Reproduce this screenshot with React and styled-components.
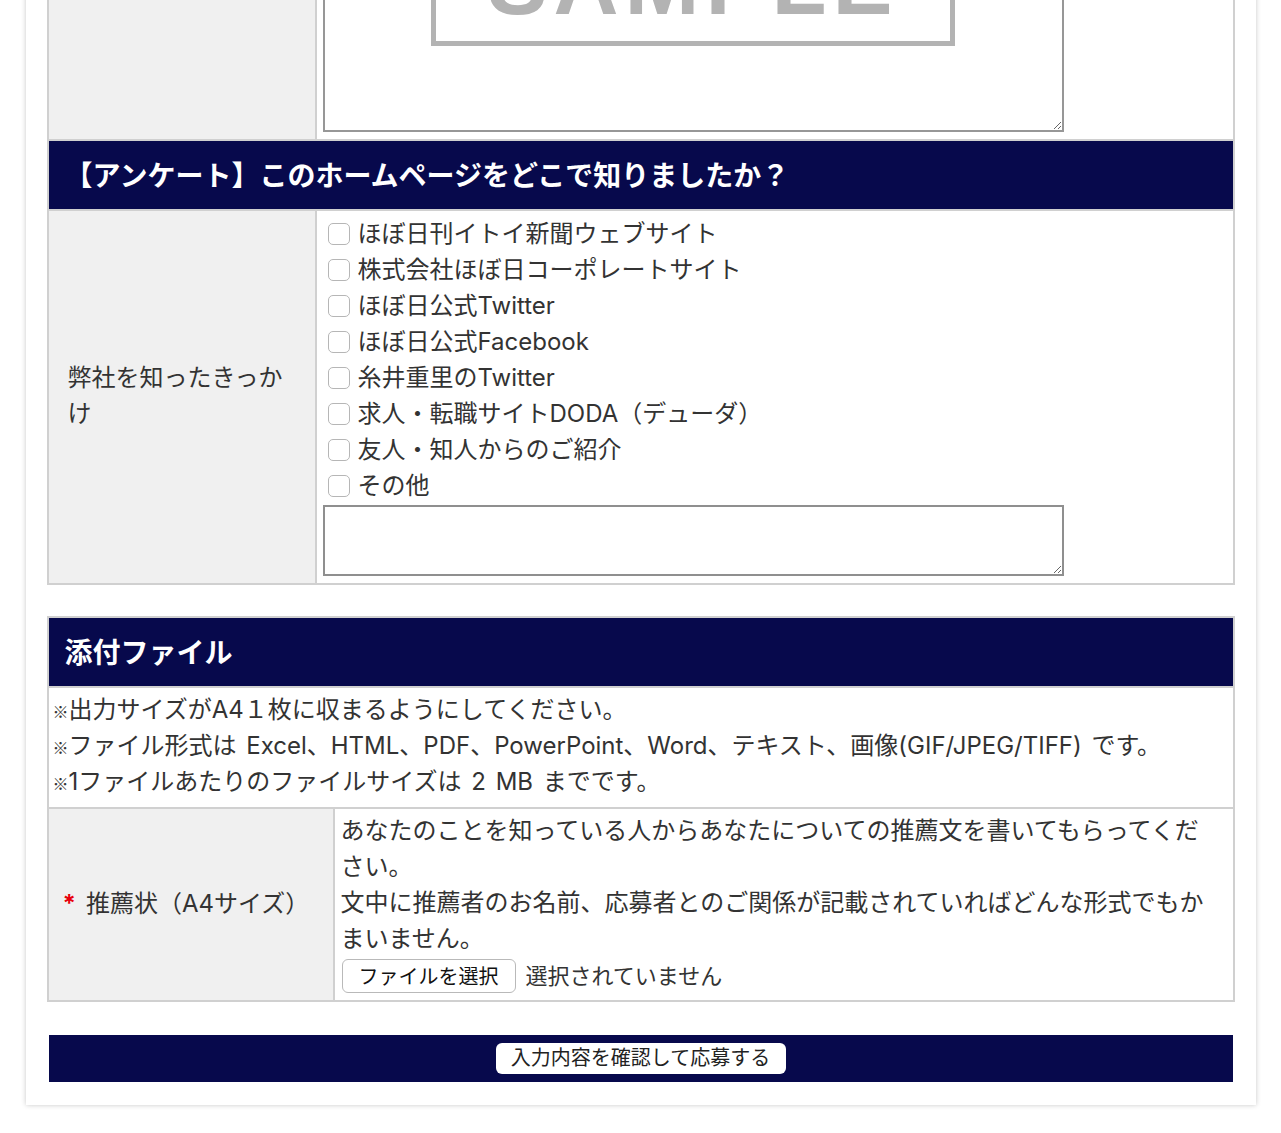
import React from 'react';
import styled, { createGlobalStyle } from 'styled-components';

const NAVY = '#07094c';
const LINE = '#d0d0d0';
const FONT = 'Inter, "Noto Sans CJK JP", "Noto Sans", sans-serif';
const CJK = '"Noto Sans CJK JP", sans-serif';

const GlobalStyle = createGlobalStyle`
  html, body { margin: 0; padding: 0; background: #fff; }
  body { font-family: ${FONT}; color: #333; overflow-x: hidden; }
  * { box-sizing: border-box; }
`;

const Card = styled.div`
  width: 1230px;
  margin: -160px auto 28px;
  padding: 0 21px 23px;
  background: #fff;
  box-shadow: 0 0 5px rgba(0, 0, 0, 0.22);
  display: flex;
  flex-direction: column;
  gap: 31px;
`;

const FormGrid = styled.div`
  display: grid;
  grid-template-columns: ${(p) => p.$labelWidth}px 1fr;
  gap: 2px;
  border: 2px solid ${LINE};
  background: ${LINE};
`;

const SectionHeader = styled.div`
  grid-column: 1 / -1;
  height: 68px;
  display: flex;
  align-items: center;
  padding: 0 16px 2px;
  background: ${NAVY};
  color: #fff;
  font-size: 28px;
  font-weight: 700;
`;

const LabelCell = styled.div`
  background: #f0f0f0;
  display: flex;
  align-items: center;
  padding: 0 ${(p) => p.$padRight ?? 20}px 2px ${(p) => p.$padLeft ?? 19}px;
  font-size: 24px;
  line-height: 36px;
  color: #333;
`;

const ValueCell = styled.div`
  background: #fff;
  padding: ${(p) => p.$pad || '6px 6px 7px'};
  font-size: 24px;
  line-height: 36px;
  color: #333;
`;

const NoteCell = styled.div`
  grid-column: 1 / -1;
  background: #fff;
  padding: 4px 4px 7px;
  font-size: 24px;
  line-height: 36px;
  color: #333;
`;

const NoteLine = styled.div`
  height: 36px;
  white-space: nowrap;
  word-spacing: 3px;
`;

const Kome = styled.span`
  font-family: ${CJK};
  font-size: 16px;
  line-height: 1;
`;

const ImageArea = styled.div`
  width: 741px;
  height: 284px;
  border: 2px solid #979797;
  background: #fff;
  overflow: hidden;
  resize: vertical;
  padding-top: 46px;
`;

const SampleBox = styled.div`
  width: 524px;
  height: 150px;
  margin: 0 auto;
  border: 5px solid #b3b3b3;
  padding-top: 37px;
  text-align: center;
  font-family: "Liberation Sans", Arial, sans-serif;
  font-weight: 700;
  font-size: 90px;
  line-height: 1;
  letter-spacing: 6px;
  color: #b3b3b3;
`;

const ChoiceList = styled.div`
  display: flex;
  flex-direction: column;
`;

const Choice = styled.label`
  display: flex;
  align-items: center;
  height: 36px;
  gap: 8px;
  padding-left: 5px;
  white-space: nowrap;
`;

const Check = styled.input.attrs({ type: 'checkbox' })`
  appearance: none;
  -webkit-appearance: none;
  margin: 0;
  width: 22px;
  height: 22px;
  flex: none;
  border: 1px solid #b6b6b6;
  border-radius: 5px;
  background: #fff;
`;

const OtherText = styled.textarea`
  display: block;
  width: 741px;
  height: 71px;
  margin-top: 1px;
  border: 2px solid #8f8f8f;
  border-radius: 0;
  padding: 4px;
  font-family: ${FONT};
  font-size: 20px;
  background: #fff;
`;

const Required = styled.span`
  color: #e8000b;
  font-weight: 700;
  font-size: 24px;
  margin-right: 10px;
`;

const Paragraph = styled.div``;

const FileRow = styled.div`
  display: flex;
  align-items: center;
  gap: 10px;
  height: 38px;
  font-size: 22px;
  color: #333;
`;

const FileButton = styled.button`
  height: 34px;
  margin-left: 1px;
  padding: 1px 16px 0;
  border: 1px solid #b9b9b9;
  border-radius: 6px;
  background: #fff;
  font-family: ${FONT};
  font-size: 20px;
  color: #111;
  line-height: 30px;
`;

const SubmitBar = styled.div`
  height: 47px;
  margin: 2px 2px 0;
  background: ${NAVY};
  display: flex;
  align-items: center;
  justify-content: center;
`;

const SubmitButton = styled.button`
  width: 290px;
  height: 31px;
  border: none;
  border-radius: 6px;
  background: #fff;
  font-family: ${FONT};
  font-size: 20px;
  color: #222;
  line-height: 31px;
  padding: 0;
`;

const choices = [
  'ほぼ日刊イトイ新聞ウェブサイト',
  '株式会社ほぼ日コーポレートサイト',
  'ほぼ日公式Twitter',
  'ほぼ日公式Facebook',
  '糸井重里のTwitter',
  '求人・転職サイトDODA（デューダ）',
  '友人・知人からのご紹介',
  'その他',
];

export default function App() {
  return (
    <>
      <GlobalStyle />
      <Card>
        <FormGrid $labelWidth={266}>
          <LabelCell />
          <ValueCell>
            <ImageArea>
              <SampleBox>SAMPLE</SampleBox>
            </ImageArea>
          </ValueCell>
          <SectionHeader>【アンケート】このホームページをどこで知りましたか？</SectionHeader>
          <LabelCell>弊社を知ったきっかけ</LabelCell>
          <ValueCell $pad="5px 6px 7px">
            <ChoiceList>
              {choices.map((c) => (
                <Choice key={c}>
                  <Check />
                  <span>{c}</span>
                </Choice>
              ))}
            </ChoiceList>
            <OtherText />
          </ValueCell>
        </FormGrid>

        <FormGrid $labelWidth={284}>
          <SectionHeader>添付ファイル</SectionHeader>
          <NoteCell>
            <NoteLine><Kome>※</Kome>出力サイズがA4１枚に収まるようにしてください。</NoteLine>
            <NoteLine><Kome>※</Kome>ファイル形式は Excel、HTML、PDF、PowerPoint、Word、テキスト、画像(GIF/JPEG/TIFF) です。</NoteLine>
            <NoteLine><Kome>※</Kome>1ファイルあたりのファイルサイズは 2 MB までです。</NoteLine>
          </NoteCell>
          <LabelCell $padLeft={14} $padRight={10}>
            <Required>*</Required>推薦状（A4サイズ）
          </LabelCell>
          <ValueCell $pad="4px 20px 5px 6px">
            <Paragraph>あなたのことを知っている人からあなたについての推薦文を書いてもらってください。</Paragraph>
            <Paragraph>文中に推薦者のお名前、応募者とのご関係が記載されていればどんな形式でもかまいません。</Paragraph>
            <FileRow>
              <FileButton type="button">ファイルを選択</FileButton>
              <span>選択されていません</span>
            </FileRow>
          </ValueCell>
        </FormGrid>

        <SubmitBar>
          <SubmitButton type="button">入力内容を確認して応募する</SubmitButton>
        </SubmitBar>
      </Card>
    </>
  );
}
